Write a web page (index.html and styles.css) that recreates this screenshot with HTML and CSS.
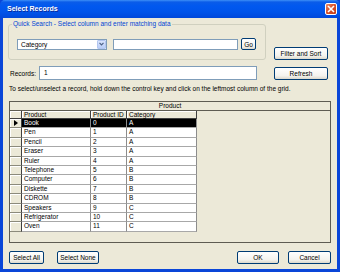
FILE: index.html
```html
<!DOCTYPE html>
<html lang="en">
<head>
    <meta charset="UTF-8">
    <title>Select Records</title>
    <link rel="stylesheet" href="styles.css">
</head>
<body>
    <div class="window">
        <div class="titlebar">
            <span class="title">Select Records</span>
            <span class="close">
                <svg width="8" height="8" viewBox="0 0 8 8"><path d="M1 1L7 7M7 1L1 7" stroke="#fff" stroke-width="1.6"/></svg>
            </span>
        </div>
        <div class="client">
            <div class="top-row">
                <fieldset class="group">
                    <legend>Quick Search - Select column and enter matching data</legend>
                    <div class="search-row">
                        <div class="combo">
                            <span class="combo-text">Category</span>
                            <span class="drop"><svg width="5" height="4" viewBox="0 0 5 4"><path d="M0.5 0.8L2.5 2.8L4.5 0.8" fill="none" stroke="#4d6185" stroke-width="1.2"/></svg></span>
                        </div>
                        <div class="textbox search-box"></div>
                        <button class="btn go-btn">Go</button>
                    </div>
                </fieldset>
                <button class="btn side-btn">Filter and Sort</button>
            </div>

            <div class="records-row">
                <span class="label">Records:</span>
                <div class="textbox records-box">1</div>
                <button class="btn side-btn">Refresh</button>
            </div>

            <p class="hint">To select/unselect a record, hold down the control key and click on the leftmost column of the grid.</p>

            <div class="grid">
                <div class="caption">Product</div>
                <div class="rows" id="rows">
                    <div class="sel head"></div>
                    <div class="colhead">Product</div>
                    <div class="colhead">Product ID</div>
                    <div class="colhead">Category</div>
                </div>
            </div>

            <div class="bottom-row">
                <button class="btn select-all">Select All</button>
                <button class="btn select-none">Select None</button>
                <button class="btn ok-btn">OK</button>
                <button class="btn cancel-btn">Cancel</button>
            </div>
        </div>
    </div>

    <script>
        let products = [
            ["Book", 0, "A"], ["Pen", 1, "A"], ["Pencil", 2, "A"], ["Eraser", 3, "A"],
            ["Ruler", 4, "A"], ["Telephone", 5, "B"], ["Computer", 6, "B"], ["Diskette", 7, "B"],
            ["CDROM", 8, "B"], ["Speakers", 9, "C"], ["Refrigerator", 10, "C"], ["Oven", 11, "C"]
        ];

        let rows = document.getElementById("rows");
        products.forEach((p, i) => {
            let sel = document.createElement("div");
            sel.className = "sel";
            if (i === 0) sel.innerHTML = '<svg width="4" height="6" viewBox="0 0 4 6"><path d="M0 0L4 3L0 6Z" fill="#000"/></svg>';
            rows.appendChild(sel);
            p.forEach(v => {
                let cell = document.createElement("div");
                cell.className = i === 0 ? "cell current" : "cell";
                cell.innerText = v;
                rows.appendChild(cell);
            });
        });
    </script>
</body>
</html>
```

FILE: styles.css
```css
* {
    box-sizing: border-box;
}
body {
    margin: 0;
    font-family: "Liberation Sans", Arial, sans-serif;
    font-size: 6.5px;
    color: #000;
}
.window {
    width: 340px;
    height: 272px;
    display: flex;
    flex-direction: column;
    background: #0a46d8;
    padding: 0 3px 3px 3px;
}
.titlebar {
    height: 18px;
    margin: 0 -3px;
    display: flex;
    align-items: center;
    padding: 0 3px 0 7px;
    border-radius: 5px 5px 0 0;
    background: linear-gradient(#3d8ff7 0, #0b5ce9 2px, #0158ef 6px, #0054ea 12px, #0048da 100%);
}
.title {
    color: #fff;
    font-weight: bold;
    font-size: 7px;
    text-shadow: 1px 1px 0 #0a2a9a;
    margin-top: -1px;
}
.close {
    margin-left: auto;
    width: 12px;
    height: 12px;
    margin-top: -1px;
    border: 1px solid #fff;
    border-radius: 2px;
    background: linear-gradient(135deg, #ec8a6a, #d9532c 45%, #c23a16);
    display: flex;
    align-items: center;
    justify-content: center;
}
.client {
    flex: 1;
    background: #ece9d8;
    display: flex;
    flex-direction: column;
    padding: 0 6px;
}
.top-row {
    display: flex;
    align-items: flex-end;
    margin-top: 2px;
}
.group {
    margin: 0 0 0 -1px;
    width: 258px;
    border: 1px solid #d0d0bf;
    border-radius: 3px;
    padding: 10px 8px 9px 8px;
}
.group legend {
    color: #0046d5;
    padding: 0 1px;
    margin-left: -5px;
    line-height: 8px;
}
.search-row {
    display: flex;
    align-items: center;
}
.textbox {
    height: 11px;
    background: #fff;
    border: 1px solid #7f9db9;
}
.combo {
    width: 90px;
    height: 11px;
    background: #fff;
    border: 1px solid #7f9db9;
    display: flex;
    align-items: center;
    padding-left: 3px;
}
.combo-text {
    flex: 1;
}
.drop {
    width: 9px;
    height: 9px;
    background: linear-gradient(#d8e4fd, #b9cdf8);
    border: 1px solid #b3c6f0;
    border-radius: 1px;
    display: flex;
    align-items: center;
    justify-content: center;
}
.search-box {
    width: 125px;
    margin-left: 6px;
}
.btn {
    font-family: "Liberation Sans", Arial, sans-serif;
    font-size: 6.5px;
    color: #000;
    height: 13px;
    padding: 0;
    border: 1px solid #003c74;
    border-radius: 2px;
    background: linear-gradient(#ffffff, #f4f3ee 70%, #dcd8cc);
}
.go-btn {
    width: 15px;
    height: 12px;
    margin-left: 3px;
}
.side-btn {
    width: 54px;
    margin-left: auto;
    margin-right: 3px;
}
.records-row {
    display: flex;
    align-items: center;
    margin-top: 6px;
}
.label {
    margin-left: 1px;
    width: 29px;
}
.records-box {
    width: 218px;
    height: 14px;
    padding-left: 4px;
    line-height: 12px;
}
.hint {
    margin: 4px 0 0 0;
    line-height: 9px;
}
.grid {
    margin-top: 8px;
    width: 322px;
    height: 142px;
    border: 1px solid #5e5c52;
    background: #ece9d8;
}
.caption {
    height: 9px;
    line-height: 8px;
    text-align: center;
    border-bottom: 1px solid #5e5c52;
}
.rows {
    display: grid;
    grid-template-columns: 12px 69px 36px 70px;
    grid-template-rows: 8px;
    grid-auto-rows: 9.4px;
}
.sel {
    border-right: 1px solid #404040;
    border-bottom: 1px solid #8c8a7c;
    box-shadow: inset 1px 1px 0 #fff;
    display: flex;
    align-items: center;
    padding-left: 4px;
}
.sel.head {
    border-bottom: 1px solid #404040;
}
.colhead {
    border-right: 1px solid #404040;
    border-bottom: 1px solid #404040;
    box-shadow: inset 1px 1px 0 #fff;
    padding-left: 2px;
    line-height: 7px;
}
.cell {
    background: #fff;
    border-right: 1px solid #8c8c8c;
    border-bottom: 1px solid #a8a8a8;
    padding-left: 2px;
    line-height: 8px;
    white-space: nowrap;
}
.cell.current {
    background: #000;
    color: #fff;
}
.bottom-row {
    display: flex;
    margin-top: 8px;
}
.select-all {
    width: 35px;
}
.select-none {
    width: 42px;
    margin-left: 13px;
}
.ok-btn {
    width: 42px;
    margin-left: auto;
}
.cancel-btn {
    width: 43px;
    margin-left: 9px;
}
```
